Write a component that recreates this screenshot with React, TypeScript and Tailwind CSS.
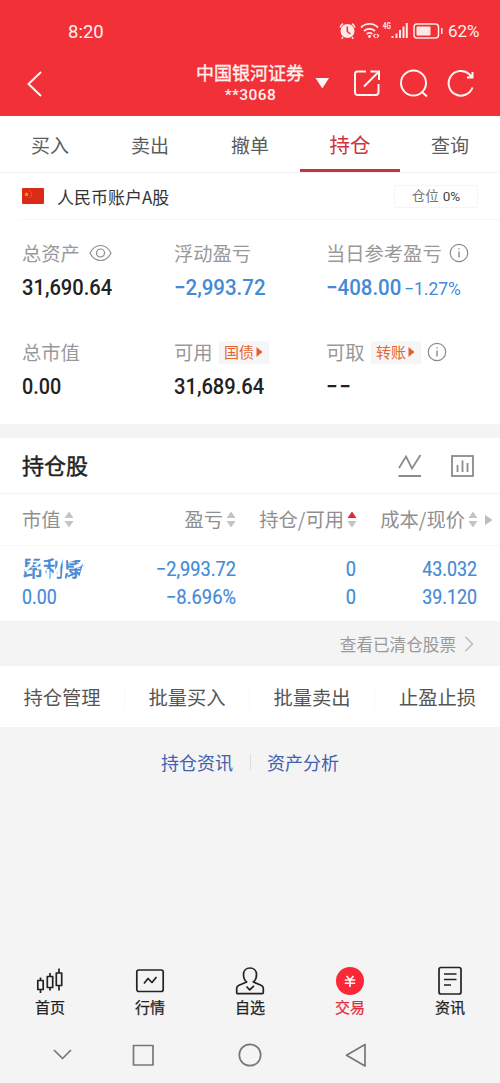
import React from "react";

type NumProps = { children: React.ReactNode; className?: string };

const Num = ({ children, className = "" }: NumProps) => (
  <span className={`inline-block whitespace-nowrap font-medium ${className}`} style={{ fontFamily: "Roboto, sans-serif" }}>
    {children}
  </span>
);

const Sort = ({ up = false }: { up?: boolean }) => (
  <svg width="10" height="17" viewBox="0 0 10 17" className="shrink-0">
    <path d="M5 .5 9.5 7h-9z" fill={up ? "#e0293f" : "#c4c4c4"} />
    <path d="M5 16.5 9.5 10h-9z" fill="#c4c4c4" />
  </svg>
);

const Info = () => (
  <svg width="20" height="20" viewBox="0 0 20 20" fill="none" stroke="#8c8c8c" className="shrink-0">
    <circle cx="10" cy="10" r="8.7" strokeWidth="1.2" />
    <path d="M10 8.4v6M10 5.2v1.4" strokeWidth="1.4" />
  </svg>
);

const Tag = ({ label }: { label: string }) => (
  <span className="flex h-[23px] w-[50px] shrink-0 items-center justify-center gap-[2px] bg-[#f6f6f7] text-[15px] leading-none text-[#e4662f]">
    <span className="pb-[2px]">{label}</span>
    <svg width="7" height="10" viewBox="0 0 7 10">
      <path d="M.5 0 6.5 5l-6 5z" fill="#e4602f" />
    </svg>
  </span>
);

const Label = ({ children }: { children: React.ReactNode }) => <span className="pt-[2px]">{children}</span>;

const StatusIcons = () => (
  <svg width="110" height="22" viewBox="338 20 110 22" fill="none" stroke="#ffe9e6" className="shrink-0">
    <circle cx="347.5" cy="31" r="7" fill="#ffe9e6" stroke="none" />
    <path d="M340 27.5a9 9 0 0 1 3-3.8M355 27.5a9 9 0 0 0-3-3.8M343 37l-1.3 1.7M352 37l1.3 1.7" strokeWidth="1.5" />
    <path d="M347.3 26.5v5l3 2.5" stroke="#f23038" strokeWidth="1.5" />
    <path d="M361 27.5a12 12 0 0 1 17 0M364 31a8 8 0 0 1 11 0M366.8 34a4 4 0 0 1 5.5 0" strokeWidth="1.8" />
    <circle cx="369.5" cy="36.5" r="1.4" fill="#ffe9e6" stroke="none" />
    <path d="m375.500 33.800-2 2 2 2M376.700 33.800l2 2-2 2" strokeWidth="1.2" />
    <path d="M392.5 36v2M396.5 33.500v4.500M400 30v8M403.500 26.500v11.500M406.800 23v15" strokeWidth="2" />
    <rect x="414" y="24" width="24.500" height="14" rx="3" strokeWidth="1.500" />
    <rect x="416.500" y="26.500" width="14" height="9" rx="1" fill="#ffe9e6" stroke="none" />
    <path d="M441.800 28v6" strokeWidth="1.500" />
    <text transform="translate(382.800 28.800) scale(.72 1)" fill="#ffe9e6" stroke="none" className="text-[9px] font-bold" fontFamily="Roboto">
      4G
    </text>
  </svg>
);

const tabs = ["买入", "卖出", "撤单", "持仓", "查询"];
const actions = ["持仓管理", "批量买入", "批量卖出", "止盈止损"];

const navItems = [
  {
    label: "首页",
    icon: (
      <g strokeWidth="1.700">
        <path d="M6.500 12.500v3M6.500 25v3M16 8v3.500M16 22.500v3M25 3.500V8M25 20.500v5" />
        <rect x="3.800" y="15.500" width="5.400" height="9" />
        <rect x="13.300" y="11.500" width="5.400" height="11" />
        <rect x="22.300" y="8" width="5.400" height="12.500" />
      </g>
    ),
  },
  {
    label: "行情",
    icon: (
      <g strokeWidth="1.700">
        <rect x="2.800" y="5" width="26.400" height="21.500" rx="2" />
        <path d="m10 18.500 4-5 4 4 4.500-5.500" />
      </g>
    ),
  },
  {
    label: "自选",
    icon: (
      <path
        strokeWidth="1.700"
        d="M12.700 17c-2.400-1.700-3.200-4.500-3.200-7.500 0-4 2.700-6.500 6.500-6.500s6.500 2.500 6.500 6.500c0 3-.8 5.800-3.200 7.500l7.700 3.200c1.500.6 2.300 1.300 2.300 3v4.300c0 .8-.3 1.200-1.200 1.200H3.900c-.9 0-1.200-.4-1.200-1.200v-4.300c0-1.700.8-2.400 2.300-3zM12.500 21.500l3.200 3.300 4.300-4"
      />
    ),
  },
  {
    label: "交易",
    icon: (
      <>
        <circle cx="16" cy="16" r="14" fill="#fb2837" stroke="none" />
        <path stroke="#fff" strokeWidth="1.600" d="m12.500 11 3.500 4 3.500-4M10.800 15h10.400M10.800 18.300h10.400M16 15v7" />
      </>
    ),
  },
  {
    label: "资讯",
    icon: (
      <g strokeWidth="1.700">
        <rect x="5" y="2.500" width="22" height="26.500" rx="2" />
        <path d="M10 9h12.500M10 14.500h12.500M10 20h7" />
      </g>
    ),
  },
];

export default function App() {
  return (
    <div
      className="flex h-[1083px] w-[500px] flex-col overflow-hidden bg-[#f4f4f4] leading-none"
      style={{ fontFamily: '"Noto Sans CJK SC", sans-serif' }}
    >
      <header className="flex h-[116px] shrink-0 flex-col bg-[#f23038] text-[#fff1ed]">
        <div className="flex h-[50px] items-center justify-between pl-[68px] pr-[21px] pt-[12px]">
          <Num className="pt-[2px] text-[18.5px] font-normal!">8:20</Num>
          <div className="flex items-center">
            <StatusIcons />
            <Num className="w-[31px] pt-px text-[17px] font-normal!">62%</Num>
          </div>
        </div>
        <div className="flex h-[66px] items-center">
          <svg width="50" height="30" viewBox="0 0 50 30" fill="none" stroke="#fff5f2" strokeWidth="2">
            <path d="M41 4 28.500 16 41 28" />
          </svg>
          <div className="ml-[140px] flex w-[120px] flex-col items-center pt-px">
            <div className="text-[18px] leading-[23px] [-webkit-text-stroke:0.35px]">中国银河证券</div>
            <Num className="pl-px text-[15.5px] leading-[23px] tracking-[0.4px]">**3068</Num>
          </div>
          <svg width="186" height="40" viewBox="310 62 186 40" fill="none" stroke="#fff5f2" strokeWidth="2">
            <path d="M315.500 77h13.500l-6.700 10.500z" fill="#fff5f2" stroke="none" />
            <path d="M366 70.500h-8.500a2.500 2.500 0 0 0-2.500 2.500v18.500a2.500 2.500 0 0 0 2.500 2.500h18.500a2.500 2.500 0 0 0 2.500-2.500V83M370.500 70.500h8.500V79M379 70.500l-15 15" />
            <circle cx="413.500" cy="82" r="12.500" />
            <path d="m421.500 90.500 5.500 5" />
            <path d="M472.500 86.500A12.300 12.300 0 1 1 469 73l3 3M472.500 71v5.500h-5.500" />
          </svg>
        </div>
      </header>

      <nav className="grid h-[57px] shrink-0 grid-cols-5 border-b border-[#f3f3f3] bg-white">
        {tabs.map((t) => (
          <div
            key={t}
            className={
              t === "持仓"
                ? "flex items-center justify-center border-b-[3px] border-[#cb333c] pt-[3px] text-[20.5px] text-[#cf323b]"
                : "flex items-center justify-center text-[19px] text-[#5c5c5c]"
            }
          >
            {t}
          </div>
        ))}
      </nav>

      <section className="h-[251px] shrink-0 bg-white">
        <div className="ml-[18px] flex h-[47px] items-center border-b border-[#f7f7f7] pl-[4px] pr-[22px]">
          <svg width="22" height="16" viewBox="0 0 22 16">
            <rect width="22" height="16" rx="1" fill="#dc2a18" />
            <path d="m4.500 4 .7 1.500 1.700.2-1.300 1.100.4 1.700-1.500-.9-1.500.9.4-1.700-1.300-1.100 1.700-.2z" fill="#f6a324" />
            <path d="M7.500 3h1M9 5h1M9 7.500h1M7.500 9.500h1" stroke="#f08a20" />
          </svg>
          <span className="ml-[13px] text-[17px] text-[#333]">人民币账户A股</span>
          <span className="ml-auto flex h-[23px] w-[84px] items-center justify-center gap-1 rounded-[2px] border border-[#f5f5f5] text-[13.5px] text-[#777]">
            仓位<Num className="pt-px text-[13.5px] font-normal! text-[#444]">0%</Num>
          </span>
        </div>
        <div className="grid grid-cols-[152px_152px_1fr] pl-[22px] pt-[21px] text-[19.3px] text-[#999]">
          <div className="h-[99px]">
            <div className="flex h-[24px] items-center gap-[9px]">
              <Label>总资产</Label>
              <svg width="23" height="18" viewBox="0 0 23 18" fill="none" stroke="#8c8c8c" strokeWidth="1.200">
                <path d="M1 9c2.500-5 6-7.500 10.500-7.500S19.500 4 22 9c-2.500 5-6 7.500-10.500 7.500S3.500 14 1 9z" />
                <circle cx="11.500" cy="9" r="4" />
              </svg>
            </div>
            <Num className="mt-[12px] origin-left scale-x-[0.915] text-[22px] text-[#222]">31,690.64</Num>
          </div>
          <div>
            <div className="flex h-[24px] items-center"><Label>浮动盈亏</Label></div>
            <Num className="mt-[12px] origin-left scale-x-[0.930] text-[22px] text-[#438ad7]">−2,993.72</Num>
          </div>
          <div>
            <div className="flex h-[24px] items-center gap-[7px] whitespace-nowrap">
              <Label>当日参考盈亏</Label>
              <Info />
            </div>
            <div className="mt-[12px] flex items-baseline">
              <Num className="w-[78px] origin-left scale-x-[0.930] text-[22px] text-[#438ad7]">−408.00</Num>
              <Num className="origin-left scale-x-[0.970] text-[18px] font-normal! text-[#438ad7]">−1.27%</Num>
            </div>
          </div>
          <div>
            <div className="flex h-[24px] items-center"><Label>总市值</Label></div>
            <Num className="mt-[12px] origin-left scale-x-[0.900] text-[22px] text-[#222]">0.00</Num>
          </div>
          <div>
            <div className="flex h-[24px] items-center gap-[6px]">
              <Label>可用</Label>
              <Tag label="国债" />
            </div>
            <Num className="mt-[12px] origin-left scale-x-[0.915] text-[22px] text-[#222]">31,689.64</Num>
          </div>
          <div>
            <div className="flex h-[24px] items-center gap-[6px]">
              <Label>可取</Label>
              <Tag label="转账" />
              <Info />
            </div>
            <Num className="mt-[12px] origin-left scale-x-[0.930] text-[22px] tracking-[2px] text-[#222]">−−</Num>
          </div>
        </div>
      </section>

      <section className="mt-[14px] h-[183px] shrink-0 bg-white">
        <div className="flex h-[56px] items-center border-b border-[#f3f3f3] pl-[22px]">
          <h2 className="pb-[3px] text-[22px] text-[#222] [-webkit-text-stroke:0.45px]">持仓股</h2>
          <svg width="80" height="28" viewBox="396 452 80 28" fill="none" stroke="#8b8b8b" strokeWidth="1.800" className="ml-auto mr-[24px]">
            <path d="m399 468 7-11.500 6 12 8.500-13.500M398.500 476h22.500" />
            <rect x="452" y="456" width="21" height="20" />
            <path d="M457.500 465v7M462.500 460.500V472M467.500 463v9" />
          </svg>
        </div>
        <div className="flex h-[52px] items-center border-b border-[#f7f7f7] pl-[22px] text-[19.3px] text-[#8f8f8f]">
          <div className="flex w-[80px] items-center gap-[3px]">市值<Sort /></div>
          <div className="flex w-[134px] items-center justify-end gap-[3px]">盈亏<Sort /></div>
          <div className="flex w-[121px] items-center justify-end gap-[3px] whitespace-nowrap">持仓/可用<Sort up /></div>
          <div className="flex w-[121px] items-center justify-end gap-[3px] whitespace-nowrap">成本/现价<Sort /></div>
          <svg width="8" height="10" viewBox="0 0 8 10" className="ml-[7px]">
            <path d="M0 0 7.500 5 0 10z" fill="#bdbdbd" />
          </svg>
        </div>
        <div className="grid grid-cols-[80px_134px_120px_121px] grid-rows-[28px_28px] pl-[22px] pt-[9px] text-[20px] text-[#438ad7] [-webkit-text-stroke:0.2px]">
          <div className="relative flex h-[28px] items-center">
            <span className="pb-[4px] text-[21px] [-webkit-text-stroke:0.6px]">昂利康</span>
            <svg className="absolute left-0 top-0" width="68" height="28" viewBox="0 0 68 28" stroke="#fff" strokeWidth="3" fill="none">
              <path d="M11 2 9 10l-6 6M22 3l-9 8M21 14l3 10M20 13h-5M26 14v10M40 2l-3 9-7 13M47 17l-5-2-1 10M62 2l-4 8-6 2M55 3l-9 3M62 11l-4 14M50 22l-4 3M66 17l-6 7M60 7h5" />
            </svg>
          </div>
          <Num className="origin-right scale-x-[0.910] self-center text-right font-normal!">−2,993.72</Num>
          <Num className="origin-right scale-x-[0.910] self-center text-right font-normal!">0</Num>
          <Num className="origin-right scale-x-[0.890] self-center text-right font-normal!">43.032</Num>
          <Num className="origin-left scale-x-[0.890] self-center font-normal!">0.00</Num>
          <Num className="origin-right scale-x-[0.920] self-center text-right font-normal!">−8.696%</Num>
          <Num className="origin-right scale-x-[0.910] self-center text-right font-normal!">0</Num>
          <Num className="origin-right scale-x-[0.890] self-center text-right font-normal!">39.120</Num>
        </div>
      </section>

      <div className="flex h-[45px] shrink-0 items-center justify-end gap-[8px] pr-[26px] pt-px text-[16.6px] text-[#999]">
        查看已清仓股票
        <svg width="10" height="16" viewBox="0 0 10 16" fill="none" stroke="#bdbdbd" strokeWidth="1.500">
          <path d="m1.500 1 7 7-7 7" />
        </svg>
      </div>

      <div className="grid h-[61px] shrink-0 grid-cols-4 items-center bg-white pt-[2px] text-[19.3px] text-[#555]">
        {actions.map((a) => (
          <div key={a} className="flex h-[24px] items-center justify-center border-r border-[#f8f8f8] last:border-0">
            {a}
          </div>
        ))}
      </div>

      <div className="flex h-[71px] shrink-0 items-center justify-center pb-px text-[18px] text-[#415fae]">
        <span className="pr-[17px]">持仓资讯</span>
        <span className="h-[16px] w-px bg-[#dedede]" />
        <span className="pl-[16px]">资产分析</span>
      </div>

      <footer className="mt-auto">
        <div className="grid h-[62px] grid-cols-5">
          {navItems.map((n) => (
            <div
              key={n.label}
              className={`flex flex-col items-center gap-[2px] text-[15px] ${n.label === "交易" ? "text-[#e22b39]" : "text-[#222]"}`}
            >
              <svg width="32" height="32" viewBox="0 0 32 32" fill="none" stroke="currentColor" strokeLinejoin="round">
                {n.icon}
              </svg>
              <span className="[-webkit-text-stroke:0.25px]">{n.label}</span>
            </div>
          ))}
        </div>
        <svg width="500" height="56" viewBox="0 1027 500 56" fill="none" stroke="#777" strokeWidth="1.700" strokeLinejoin="round">
          <path d="m54 1050 8.500 8.500 8.500-8.500" />
          <rect x="133.500" y="1045.500" width="19.500" height="19.500" />
          <circle cx="250" cy="1055" r="10.700" />
          <path d="M365 1044.500v21.500l-18.500-10.700z" />
        </svg>
      </footer>
    </div>
  );
}
